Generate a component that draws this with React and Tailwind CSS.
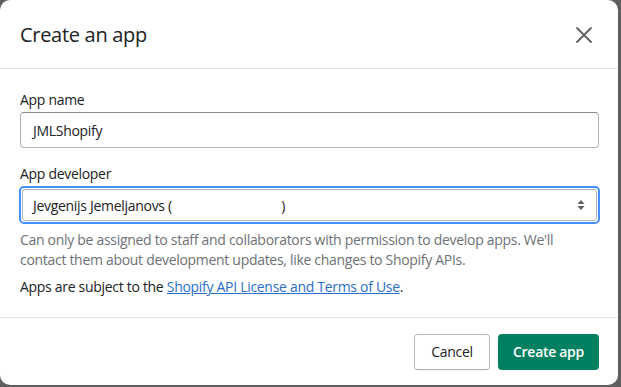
import React from 'react';

const App = () => {
    return (
        <div className="w-[621px] h-[387px] bg-[#5e5e5e] pr-[3px] pb-[2px]" style={{ fontFamily: '"Open Sans", "Noto Sans", sans-serif' }}>
            <div className="w-full h-full bg-white rounded-[10px] flex flex-col overflow-hidden">
                {/* Header */}
                <div className="h-[69px] flex items-center justify-between pl-5 pr-[18px] pt-[2px] border-b border-[#e1e3e5] shrink-0">
                    <h2 className="text-[20px] text-[#202223] tracking-[-0.3px]">Create an app</h2>
                    <button className="w-8 h-8 flex items-center justify-center text-[#5c5f62]">
                        <svg width="20" height="20" viewBox="0 0 20 20" fill="none" stroke="currentColor" strokeWidth="1.8" strokeLinecap="round">
                            <path d="M3 3 L17 17 M17 3 L3 17" />
                        </svg>
                    </button>
                </div>

                {/* Body */}
                <div className="flex-1 pl-5 pr-[19px] pt-[21px] text-[14px] text-[#202223] tracking-[-0.3px]">
                    <label className="block leading-5 mb-[2px]">App name</label>
                    <div className="h-[36px] border border-[#aeb4b9] border-t-[#898f94] rounded-[4px] flex items-center px-3">
                        JMLShopify
                    </div>

                    <label className="block leading-5 mt-[16px] mb-[2px]">App developer</label>
                    <div className="h-[38px] rounded-[5px] border-2 border-[#458fff] p-[1px] -ml-[1px] -mr-[1px]">
                        <div className="h-full border border-[#aeb4b9] rounded-[3px] flex items-center justify-between pl-[10px] pr-[10px]">
                            <span>Jevgenijs Jemeljanovs ( <span className="inline-block w-[106px]"></span>)</span>
                            <svg width="10" height="14" viewBox="0 0 10 14" fill="#5c5f62">
                                <path d="M5 2 L8.5 6 H1.5 Z M5 12 L8.5 8 H1.5 Z" />
                            </svg>
                        </div>
                    </div>

                    <p className="text-[#6d7175] leading-5 mt-[6px]">
                        Can only be assigned to staff and collaborators with permission to develop apps. We'll contact them about development updates, like changes to Shopify APIs.
                    </p>
                    <p className="leading-5 mt-[7px]">
                        Apps are subject to the{' '}
                        <a href="#" className="text-[#2c6ecb] underline">Shopify API License and Terms of Use</a>.
                    </p>
                </div>

                {/* Footer */}
                <div className="h-[68px] border-t border-[#e1e3e5] flex items-center justify-end gap-[8px] pr-[19px] shrink-0">
                    <button className="h-[36px] w-[76px] rounded-[4px] border border-[#babfc3] border-b-[#aeb4b9] text-[14px] text-[#202223] bg-white shadow-[0_1px_0_rgba(0,0,0,0.05)] tracking-[-0.3px]">
                        Cancel
                    </button>
                    <button className="h-[36px] w-[101px] rounded-[4px] bg-[#008060] text-white text-[14px] font-semibold tracking-[-0.3px]">
                        Create app
                    </button>
                </div>
            </div>
        </div>
    );
};

export default App;
